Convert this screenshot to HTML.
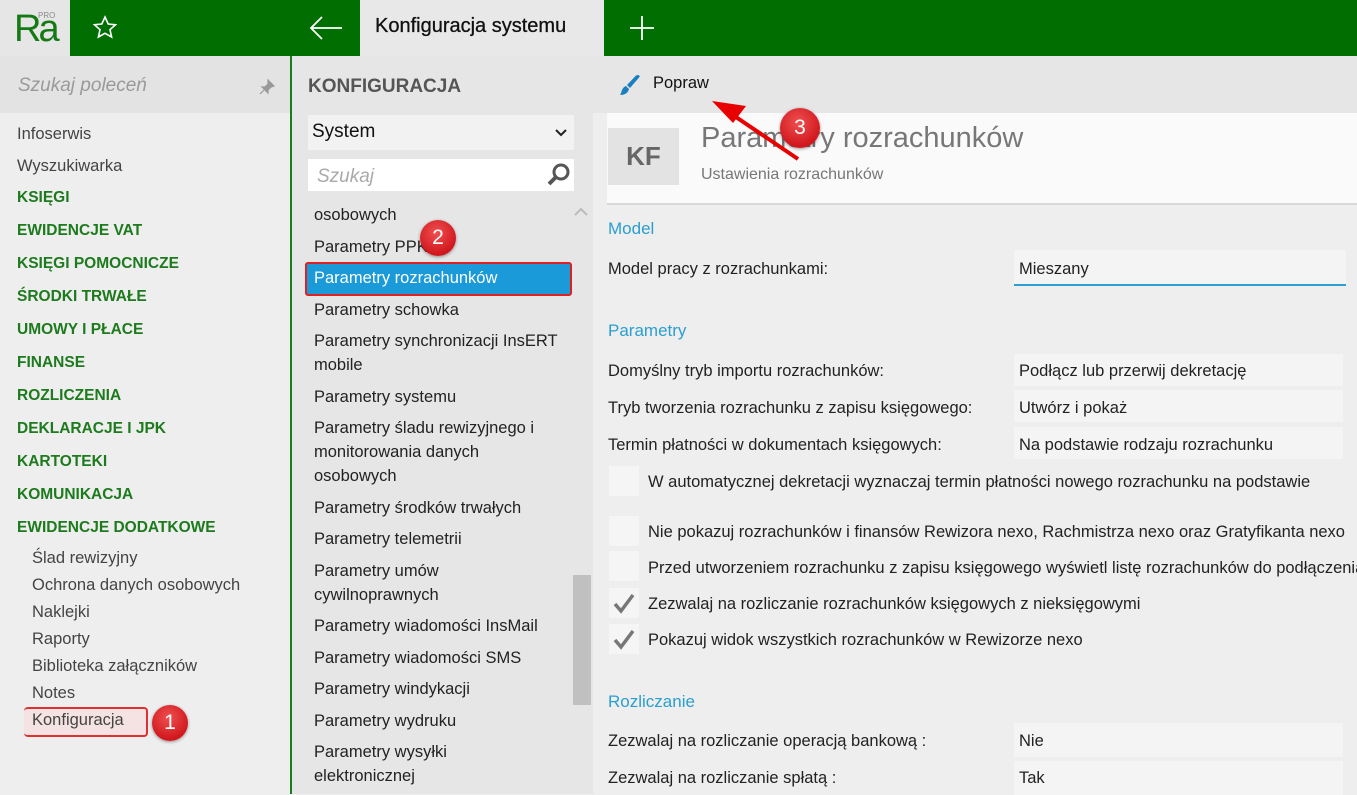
<!DOCTYPE html>
<html><head><meta charset="utf-8"><style>
*{margin:0;padding:0;box-sizing:border-box}
body{width:1357px;height:794px;overflow:hidden;position:relative;background:#eeeeee;font-family:"Liberation Sans",sans-serif;font-size:16.5px;color:#222}
.a{position:absolute;white-space:nowrap}
.g{color:#1d7a1d;font-weight:bold;font-size:15.5px}
.m{color:#444}
.lst{color:#222}
.blue{color:#2a9fd0;font-size:17px}
.box{position:absolute;background:#f4f4f4}
.cb{position:absolute;width:30px;height:30px;background:#f5f5f5}
.badge{position:absolute;width:36px;height:36px;border-radius:50%;background:radial-gradient(circle at 45% 35%,#f05050,#d0181e 70%);color:#fff;font-size:21px;text-align:center;line-height:36px;box-shadow:0 1px 3px rgba(0,0,0,.4)}
</style></head><body>
<div class="a" style="left:0;top:0;width:70px;height:56px;background:#e6e6e6"></div>
<div class="a" style="left:14px;top:8px;font-size:38px;color:#157a15;letter-spacing:-3px">Ra</div>
<div class="a" style="left:38px;top:11px;font-size:8px;color:#8a8a8a">PRO</div>
<div class="a" style="left:70px;top:0;width:290px;height:56px;background:#006e00"></div>
<svg class="a" style="left:92px;top:15px" width="26" height="26" viewBox="0 0 26 26"><path d="M13 2l3.2 7 7.3.7-5.5 5 1.6 7.3L13 18.3 6.4 22l1.6-7.3-5.5-5 7.3-.7z" fill="none" stroke="#fff" stroke-width="1.6"/></svg>
<svg class="a" style="left:308px;top:14px" width="36" height="28" viewBox="0 0 36 28"><path d="M34 14H3M14 3L3 14l11 11" fill="none" stroke="#fff" stroke-width="1.8"/></svg>
<div class="a" style="left:360px;top:0;width:244px;height:56px;background:#e8e8e8"></div>
<div class="a" style="left:375px;top:15px;font-size:20px;color:#111;-webkit-text-stroke:0.3px #111">Konfiguracja systemu</div>
<div class="a" style="left:604px;top:0;width:753px;height:56px;background:#006e00"></div>
<svg class="a" style="left:628px;top:14px" width="28" height="28"><path d="M14 2v24M2 14h24" stroke="#fff" stroke-width="1.8"/></svg>
<div class="a" style="left:0;top:56px;width:291px;height:57px;background:#e3e3e3"></div>
<div class="a" style="left:18px;top:75px;font-size:19px;color:#9a9a9a;font-style:italic">Szukaj poleceń</div>
<svg class="a" style="left:258px;top:78px" width="18" height="18" viewBox="0 0 18 18"><path d="M10 2l6 6-3 1-3 3 0 3-6-6 3 0 3-3zM6 12l-4 4" fill="#999" stroke="#999" stroke-width="1.2"/></svg>
<div class="a m" style="left:17px;top:125px">Infoserwis</div>
<div class="a m" style="left:17px;top:157px">Wyszukiwarka</div>
<div class="a g" style="left:17px;top:189px">KSIĘGI</div>
<div class="a g" style="left:17px;top:222px">EWIDENCJE VAT</div>
<div class="a g" style="left:17px;top:255px">KSIĘGI POMOCNICZE</div>
<div class="a g" style="left:17px;top:288px">ŚRODKI TRWAŁE</div>
<div class="a g" style="left:17px;top:321px">UMOWY I PŁACE</div>
<div class="a g" style="left:17px;top:354px">FINANSE</div>
<div class="a g" style="left:17px;top:387px">ROZLICZENIA</div>
<div class="a g" style="left:17px;top:420px">DEKLARACJE I JPK</div>
<div class="a g" style="left:17px;top:453px">KARTOTEKI</div>
<div class="a g" style="left:17px;top:486px">KOMUNIKACJA</div>
<div class="a g" style="left:17px;top:519px">EWIDENCJE DODATKOWE</div>
<div class="a m" style="left:32px;top:549px">Ślad rewizyjny</div>
<div class="a m" style="left:32px;top:576px">Ochrona danych osobowych</div>
<div class="a m" style="left:32px;top:603px">Naklejki</div>
<div class="a m" style="left:32px;top:630px">Raporty</div>
<div class="a m" style="left:32px;top:657px">Biblioteka załączników</div>
<div class="a m" style="left:32px;top:684px">Notes</div>
<div class="a" style="left:24px;top:707px;width:124px;height:30px;border:2px solid #e03030;border-left:none;border-radius:4px;background:#f5e2e2"></div>
<div class="a m" style="left:32px;top:711px">Konfiguracja</div>
<div class="badge" style="left:152px;top:705px">1</div>
<div class="a" style="left:290px;top:56px;width:2px;height:738px;background:#1d7a1d"></div>
<div class="a" style="left:292px;top:56px;width:301px;height:738px;background:#e6e6e6"></div>
<div class="a" style="left:308px;top:76px;font-size:19px;font-weight:bold;color:#555">KONFIGURACJA</div>
<div class="a" style="left:308px;top:115px;width:266px;height:35px;background:#f2f2f2"></div>
<div class="a" style="left:312px;top:121px;font-size:19px;color:#111">System</div>
<svg class="a" style="left:555px;top:128px" width="12" height="10"><path d="M1 2l5 5 5-5" fill="none" stroke="#222" stroke-width="2"/></svg>
<div class="a" style="left:308px;top:159px;width:266px;height:32px;background:#fff"></div>
<div class="a" style="left:317px;top:166px;font-size:19px;color:#aaa;font-style:italic">Szukaj</div>
<svg class="a" style="left:546px;top:162px" width="26" height="26" viewBox="0 0 26 26"><circle cx="15" cy="10" r="7" fill="none" stroke="#555" stroke-width="3"/><path d="M10 15l-7 7" stroke="#555" stroke-width="4"/></svg>
<svg class="a" style="left:574px;top:207px" width="14" height="10"><path d="M1 8l6-6 6 6" fill="none" stroke="#bbb" stroke-width="2"/></svg>
<div class="a" style="left:573px;top:575px;width:18px;height:130px;background:#c0c0c0"></div>
<div class="a lst" style="left:314px;top:206px">osobowych</div>
<div class="a lst" style="left:314px;top:238px">Parametry PPK</div>
<div class="badge" style="left:420px;top:220px">2</div>
<div class="a" style="left:305px;top:262px;width:267px;height:34px;border:2px solid #e02020;border-radius:3px;background:#1a9ad8"></div>
<div class="a" style="left:314px;top:269px;color:#fff">Parametry rozrachunków</div>
<div class="a lst" style="left:314px;top:301px">Parametry schowka</div>
<div class="a lst" style="left:314px;top:332px">Parametry synchronizacji InsERT</div>
<div class="a lst" style="left:314px;top:356px">mobile</div>
<div class="a lst" style="left:314px;top:388px">Parametry systemu</div>
<div class="a lst" style="left:314px;top:419px">Parametry śladu rewizyjnego i</div>
<div class="a lst" style="left:314px;top:443px">monitorowania danych</div>
<div class="a lst" style="left:314px;top:467px">osobowych</div>
<div class="a lst" style="left:314px;top:499px">Parametry środków trwałych</div>
<div class="a lst" style="left:314px;top:530px">Parametry telemetrii</div>
<div class="a lst" style="left:314px;top:562px">Parametry umów</div>
<div class="a lst" style="left:314px;top:586px">cywilnoprawnych</div>
<div class="a lst" style="left:314px;top:617px">Parametry wiadomości InsMail</div>
<div class="a lst" style="left:314px;top:649px">Parametry wiadomości SMS</div>
<div class="a lst" style="left:314px;top:680px">Parametry windykacji</div>
<div class="a lst" style="left:314px;top:712px">Parametry wydruku</div>
<div class="a lst" style="left:314px;top:743px">Parametry wysyłki</div>
<div class="a lst" style="left:314px;top:767px">elektronicznej</div>
<div class="a" style="left:593px;top:56px;width:764px;height:57px;background:#e6e6e6"></div>
<svg class="a" style="left:618px;top:73px" width="24" height="24" viewBox="0 0 24 24"><path d="M20 2c1 0 2 1 1.5 2L12 15l-3-3L18 2.5z M8 13l3 3c-1 4-4 6-9 6 2-2 1-7 6-9z" fill="#1a7fc0"/></svg>
<div class="a" style="left:653px;top:74px;color:#111">Popraw</div>
<div class="a" style="left:607px;top:113px;width:750px;height:92px;background:#fafafa;border-bottom:2px solid #d8d8d8"></div>
<div class="a" style="left:608px;top:128px;width:71px;height:57px;background:#e3e3e3;color:#666;font-size:26px;font-weight:bold;text-align:center;line-height:57px">KF</div>
<div class="a" style="left:701px;top:122px;font-size:29px;color:#777">Parametry rozrachunków</div>
<div class="a" style="left:701px;top:166px;font-size:16px;color:#777">Ustawienia rozrachunków</div>
<svg class="a" style="left:700px;top:95px" width="110" height="70"><path d="M98 64L30 18" stroke="#e80000" stroke-width="4"/><path d="M12 6l34 5-13 17z" fill="#e80000"/></svg>
<div class="badge" style="left:780px;top:108px;width:40px;height:40px;line-height:40px">3</div>
<div class="a blue" style="left:608px;top:219px">Model</div>
<div class="a" style="left:608px;top:260px">Model pracy z rozrachunkami:</div>
<div class="box" style="left:1014px;top:250px;width:332px;height:36px;border-bottom:2px solid #2a9fd0"></div>
<div class="a" style="left:1019px;top:260px">Mieszany</div>
<div class="a blue" style="left:608px;top:321px">Parametry</div>
<div class="a" style="left:608px;top:362px">Domyślny tryb importu rozrachunków:</div>
<div class="box" style="left:1014px;top:354px;width:329px;height:32px"></div>
<div class="a" style="left:1019px;top:362px">Podłącz lub przerwij dekretację</div>
<div class="a" style="left:608px;top:399px">Tryb tworzenia rozrachunku z zapisu księgowego:</div>
<div class="box" style="left:1014px;top:390px;width:329px;height:32px"></div>
<div class="a" style="left:1019px;top:399px">Utwórz i pokaż</div>
<div class="a" style="left:608px;top:436px">Termin płatności w dokumentach księgowych:</div>
<div class="box" style="left:1014px;top:427px;width:329px;height:32px"></div>
<div class="a" style="left:1019px;top:436px">Na podstawie rodzaju rozrachunku</div>
<div class="cb" style="left:609px;top:466px"></div>
<div class="a" style="left:648px;top:473px">W automatycznej dekretacji wyznaczaj termin płatności nowego rozrachunku na podstawie</div>
<div class="cb" style="left:609px;top:516px"></div>
<div class="a" style="left:648px;top:523px">Nie pokazuj rozrachunków i finansów Rewizora nexo, Rachmistrza nexo oraz Gratyfikanta nexo</div>
<div class="cb" style="left:609px;top:551px"></div>
<div class="a" style="left:648px;top:559px">Przed utworzeniem rozrachunku z zapisu księgowego wyświetl listę rozrachunków do podłączenia</div>
<div class="cb" style="left:609px;top:588px"></div>
<svg class="a" style="left:613px;top:592px" width="22" height="22"><path d="M2 12l6 7L20 3" fill="none" stroke="#777" stroke-width="3.5"/></svg>
<div class="a" style="left:648px;top:595px">Zezwalaj na rozliczanie rozrachunków księgowych z nieksięgowymi</div>
<div class="cb" style="left:609px;top:624px"></div>
<svg class="a" style="left:613px;top:628px" width="22" height="22"><path d="M2 12l6 7L20 3" fill="none" stroke="#777" stroke-width="3.5"/></svg>
<div class="a" style="left:648px;top:631px">Pokazuj widok wszystkich rozrachunków w Rewizorze nexo</div>
<div class="a blue" style="left:608px;top:692px">Rozliczanie</div>
<div class="a" style="left:608px;top:732px">Zezwalaj na rozliczanie operacją bankową :</div>
<div class="box" style="left:1014px;top:723px;width:329px;height:34px"></div>
<div class="a" style="left:1019px;top:732px">Nie</div>
<div class="a" style="left:608px;top:769px">Zezwalaj na rozliczanie spłatą :</div>
<div class="box" style="left:1014px;top:761px;width:329px;height:34px"></div>
<div class="a" style="left:1019px;top:769px">Tak</div>
</body></html>
